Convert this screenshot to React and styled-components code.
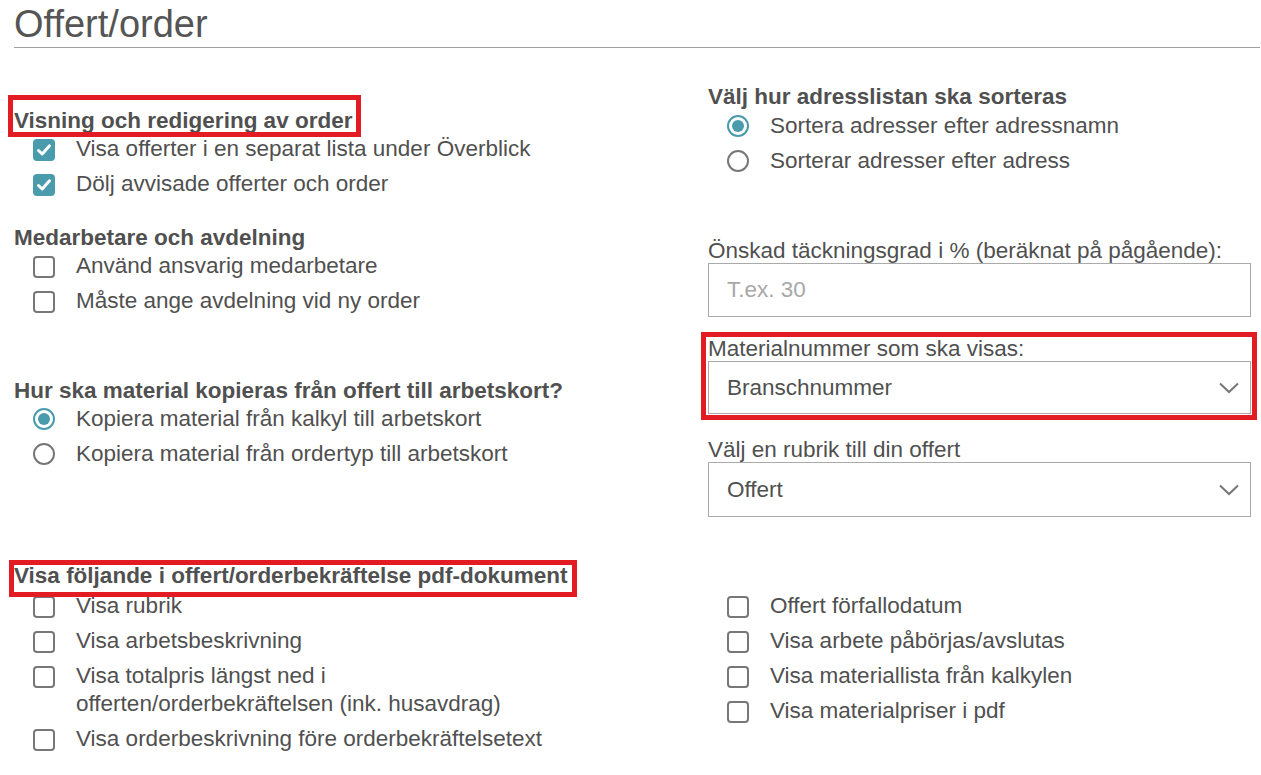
import React from 'react';
import styled, { createGlobalStyle } from 'styled-components';

const GlobalStyle = createGlobalStyle`
  body {
    margin: 0;
    background: #ffffff;
    font-family: 'Liberation Sans', Arial, sans-serif;
    color: #505050;
  }
`

const teal = '#4a9bab';

const Page = styled.div`
  padding: 0 1px 0 14px;
  width: 1246px;
`

const Title = styled.h1`
  margin: 0;
  padding: 3px 0 2px;
  font-size: 38px;
  line-height: 42px;
  font-weight: normal;
  color: #555555;
  border-bottom: 1px solid #a0a0a0;
`

const Columns = styled.div`
  display: grid;
  grid-template-columns: 694px 1fr;
  align-items: start;
  margin-top: ${p => p.$top || 0}px;
`

const Column = styled.div`
  display: flex;
  flex-direction: column;
  align-items: flex-start;
  padding-top: ${p => p.$pad || 0}px;
`

const Group = styled.div`
  display: flex;
  flex-direction: column;
  align-items: flex-start;
  margin-top: ${p => p.$top || 0}px;
`

const Heading = styled.div`
  font-size: 22.5px;
  line-height: 28px;
  font-weight: bold;
  color: #505050;
`

const Highlight = styled.div`
  position: relative;
  display: inline-block;
  margin-top: ${p => p.$top || 0}px;
  &::after {
    content: '';
    position: absolute;
    top: ${p => p.$t}px;
    right: ${p => p.$r}px;
    bottom: ${p => p.$b}px;
    left: ${p => p.$l}px;
    border: 5px solid #e31b23;
    pointer-events: none;
  }
`

const Options = styled.div`
  display: flex;
  flex-direction: column;
  gap: 7px;
  padding-left: 19px;
  margin-top: ${p => p.$top || 0}px;
`

const Option = styled.label`
  display: flex;
  align-items: flex-start;
  gap: 21px;
  font-size: 22.5px;
  line-height: 28px;
  & .text {
    max-width: 490px;
  }
`

const Box = styled.span`
  flex: none;
  box-sizing: border-box;
  width: 22px;
  height: 22px;
  margin-top: 4px;
  border-radius: 4px;
  border: 2px solid ${p => p.$on ? teal : '#777777'};
  background: ${p => p.$on ? teal : '#ffffff'};
  display: flex;
  align-items: center;
  justify-content: center;
`

const Radio = styled.span`
  flex: none;
  box-sizing: border-box;
  width: 22px;
  height: 22px;
  margin-top: 3px;
  border-radius: 50%;
  border: 2px solid ${p => p.$on ? teal : '#777777'};
  display: flex;
  align-items: center;
  justify-content: center;
  &::after {
    content: '';
    width: 12px;
    height: 12px;
    border-radius: 50%;
    background: ${p => p.$on ? teal : 'transparent'};
  }
`

const Field = styled.div`
  display: flex;
  flex-direction: column;
  width: 543px;
  margin-top: ${p => p.$top || 0}px;
`

const FieldLabel = styled.div`
  font-size: 22.5px;
  line-height: 25px;
  padding-top: 3px;
  white-space: nowrap;
`

const Control = styled.div`
  box-sizing: border-box;
  height: ${p => p.$h || 54}px;
  border: 1px solid #aaaaaa;
  display: flex;
  align-items: center;
  justify-content: space-between;
  padding: 0 11px 0 18px;
  font-size: 22.5px;
  color: ${p => p.$placeholder ? '#a8a8a8' : '#505050'};
  background: #ffffff;
`

const Check = () => (
  <svg width="16" height="16" viewBox="0 0 16 16">
    <path d="M2.5 8.5 L6.2 12 L13.5 3.8" fill="none" stroke="#ffffff" strokeWidth="3" strokeLinecap="round" strokeLinejoin="round" />
  </svg>
)

const Chevron = () => (
  <svg width="20" height="12" viewBox="0 0 20 12">
    <path d="M1 1.5 L10 10 L19 1.5" fill="none" stroke="#777777" strokeWidth="2" />
  </svg>
)

const CheckItem = ({ on, children }) => (
  <Option>
    <Box $on={on}>{on && <Check />}</Box>
    <span className="text">{children}</span>
  </Option>
)

const RadioItem = ({ on, children }) => (
  <Option>
    <Radio $on={on} />
    <span className="text">{children}</span>
  </Option>
)

export default function App() {
  return (
    <Page>
      <GlobalStyle />
      <Title>Offert/order</Title>

      <Columns $top={35}>
        <Column $pad={24}>
          <Group>
            <Highlight $t={-12} $r={-9} $b={-2} $l={-6}>
              <Heading>Visning och redigering av order</Heading>
            </Highlight>
            <Options>
              <CheckItem on>Visa offerter i en separat lista under Överblick</CheckItem>
              <CheckItem on>Dölj avvisade offerter och order</CheckItem>
            </Options>
          </Group>
          <Group $top={26}>
            <Heading>Medarbetare och avdelning</Heading>
            <Options>
              <CheckItem>Använd ansvarig medarbetare</CheckItem>
              <CheckItem>Måste ange avdelning vid ny order</CheckItem>
            </Options>
          </Group>
          <Group $top={62}>
            <Heading>Hur ska material kopieras från offert till arbetskort?</Heading>
            <Options>
              <RadioItem on>Kopiera material från kalkyl till arbetskort</RadioItem>
              <RadioItem>Kopiera material från ordertyp till arbetskort</RadioItem>
            </Options>
          </Group>
        </Column>

        <Column>
          <Group>
            <Heading>Välj hur adresslistan ska sorteras</Heading>
            <Options $top={1}>
              <RadioItem on>Sortera adresser efter adressnamn</RadioItem>
              <RadioItem>Sorterar adresser efter adress</RadioItem>
            </Options>
          </Group>
          <Field $top={60}>
            <FieldLabel>Önskad täckningsgrad i % (beräknat på pågående):</FieldLabel>
            <Control $placeholder>T.ex. 30</Control>
          </Field>
          <Highlight $top={16} $t={-1} $r={-6} $b={-6} $l={-7}>
            <Field>
              <FieldLabel>Materialnummer som ska visas:</FieldLabel>
              <Control $h={53}>Branschnummer<Chevron /></Control>
            </Field>
          </Highlight>
          <Field $top={20}>
            <FieldLabel>Välj en rubrik till din offert</FieldLabel>
            <Control $h={55}>Offert<Chevron /></Control>
          </Field>
        </Column>
      </Columns>

      <Group $top={45}>
        <Highlight $t={-2} $r={-10} $b={-7} $l={-5}>
          <Heading>Visa följande i offert/orderbekräftelse pdf-dokument</Heading>
        </Highlight>
      </Group>
      <Columns $top={2}>
        <Options>
          <CheckItem>Visa rubrik</CheckItem>
          <CheckItem>Visa arbetsbeskrivning</CheckItem>
          <CheckItem>Visa totalpris längst ned i offerten/orderbekräftelsen (ink. husavdrag)</CheckItem>
          <CheckItem>Visa orderbeskrivning före orderbekräftelsetext</CheckItem>
        </Options>
        <Options>
          <CheckItem>Offert förfallodatum</CheckItem>
          <CheckItem>Visa arbete påbörjas/avslutas</CheckItem>
          <CheckItem>Visa materiallista från kalkylen</CheckItem>
          <CheckItem>Visa materialpriser i pdf</CheckItem>
        </Options>
      </Columns>
    </Page>
  );
}
